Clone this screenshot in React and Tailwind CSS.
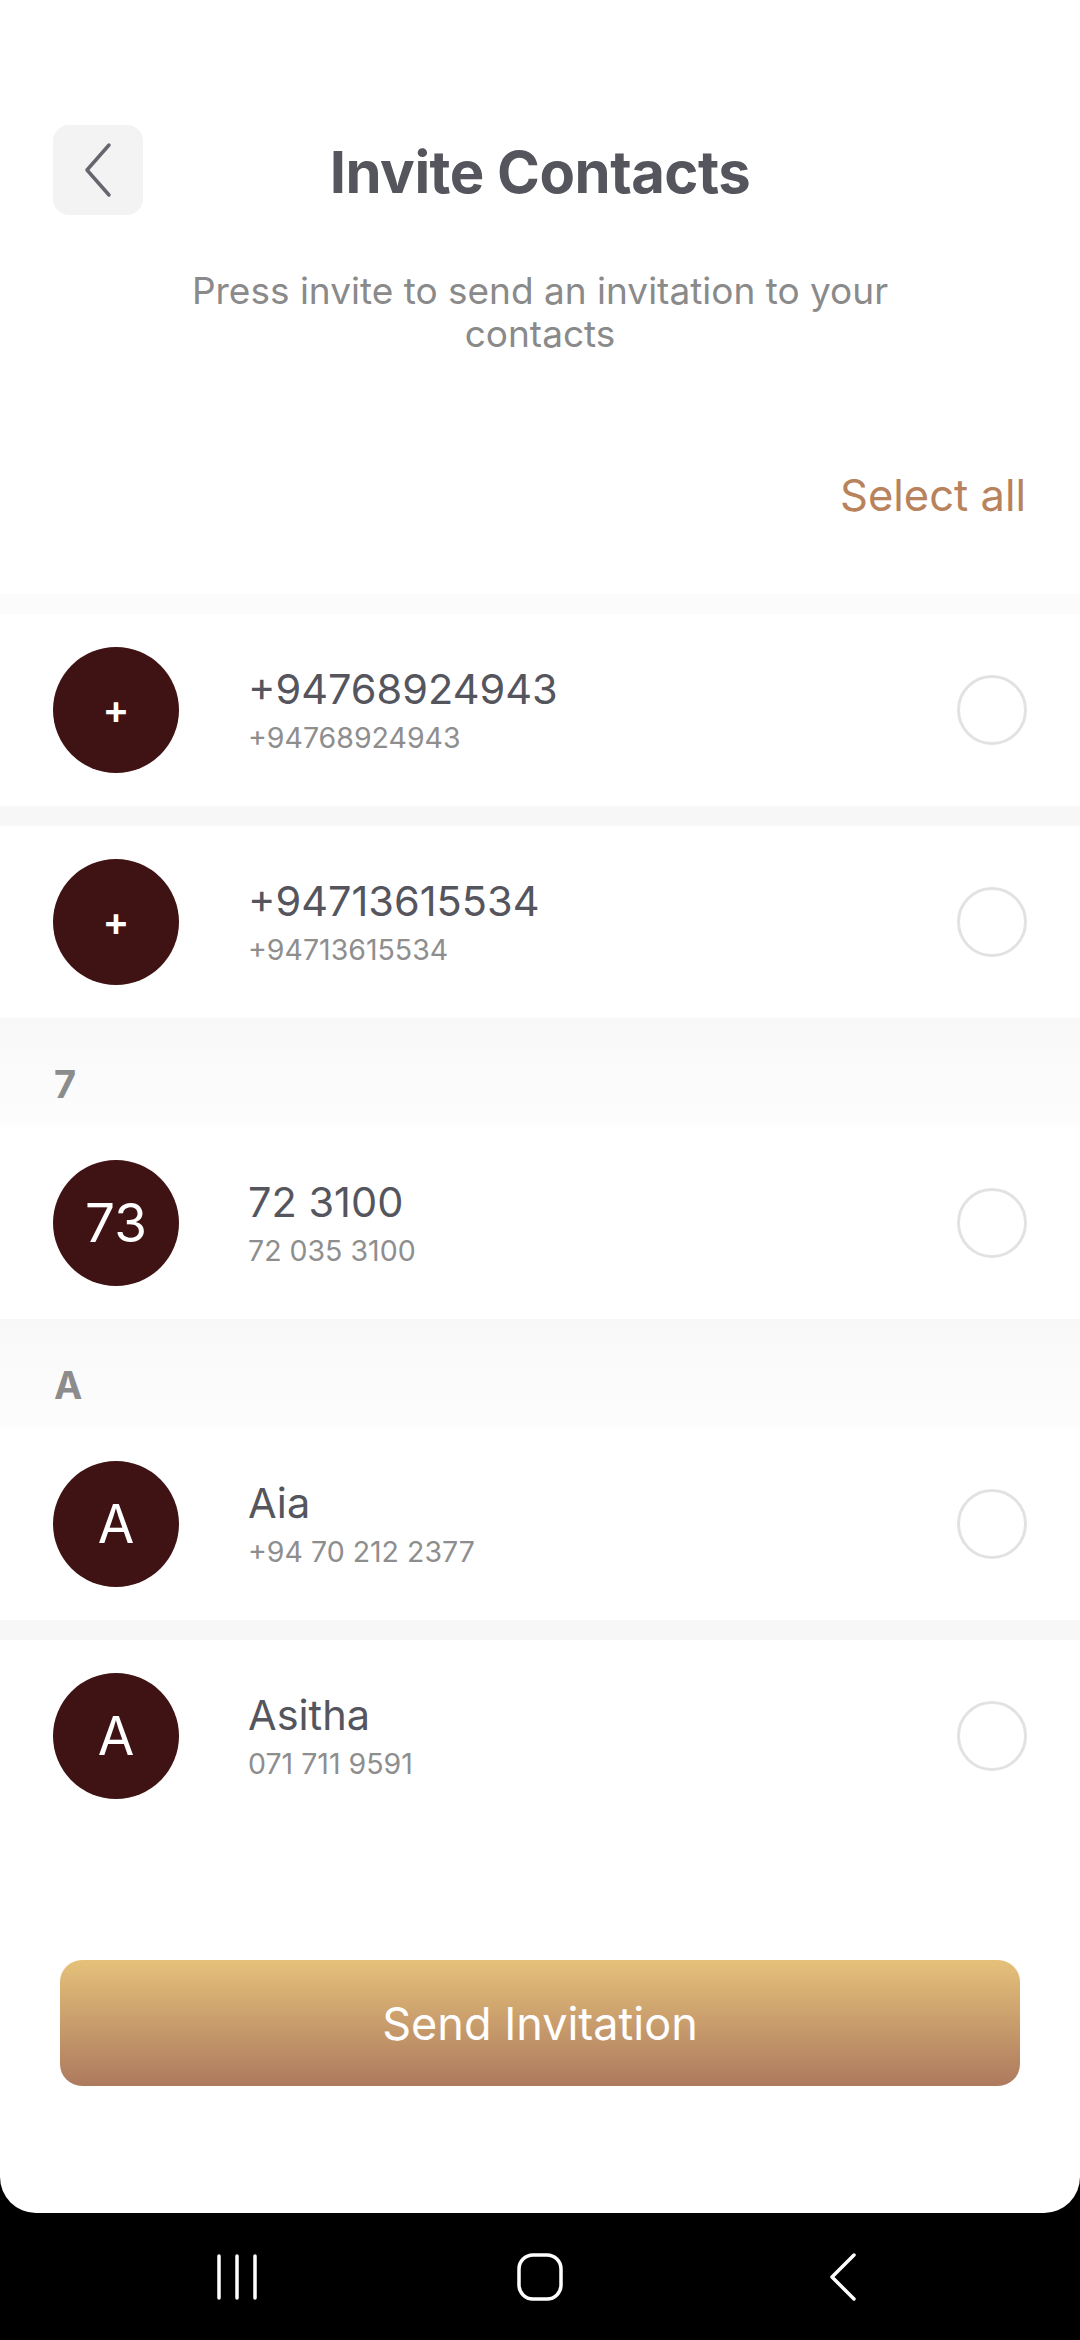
import React from "react";

const FONT = { fontFamily: "Inter, 'Open Sans', sans-serif" };

function Avatar({ label, small }) {
  return (
    <div className="w-[126px] h-[126px] rounded-full bg-[#3f1214] flex items-center justify-center shrink-0">
      {small ? (
        <span className="text-white text-[40px] font-semibold leading-none">{label}</span>
      ) : (
        <span className="text-white text-[53px] font-normal leading-none">{label}</span>
      )}
    </div>
  );
}

function Row({ label, small, name, phone }) {
  return (
    <div className="h-[192px] bg-white flex items-center pl-[53px] pr-[53px]">
      <Avatar label={label} small={small} />
      <div className="flex flex-col ml-[69px] flex-1">
        <span className="text-[41.5px] leading-[48px] text-[#55555e]">{name}</span>
        <span className="text-[28.5px] leading-[34px] text-[#8e8e8e] mt-[8px]">{phone}</span>
      </div>
      <div className="w-[70px] h-[70px] rounded-full border-[3px] border-[#e2e2e2]" />
    </div>
  );
}

function Sep({ light }) {
  return <div className={light ? "h-[20px] bg-[#fbfbfb]" : "h-[20px] bg-[#f7f7f7]"} />;
}

function Header({ letter }) {
  return (
    <div className="h-[109px] bg-gradient-to-b from-[#f8f8f8] to-[#fdfdfd] flex items-start pl-[54px] pt-[46px]">
      <span className="text-[38px] font-bold text-[#8c8c8c] leading-[40px]">{letter}</span>
    </div>
  );
}

export default function App() {
  return (
    <div className="w-[1080px] h-[2340px] bg-black flex flex-col" style={FONT}>
      <div className="bg-white rounded-b-[36px] h-[2213px] flex flex-col">
        <div className="mt-[125px] px-[53px] grid grid-cols-[90px_1fr_90px] items-center">
          <button className="w-[90px] h-[90px] rounded-[16px] bg-[#f3f3f3] flex items-center justify-center">
            <svg width="34" height="56" viewBox="0 0 34 56" fill="none">
              <path d="M28 3 L6 28 L28 53" stroke="#66666e" strokeWidth="3.5" strokeLinecap="round" strokeLinejoin="round" />
            </svg>
          </button>
          <h1 className="text-center text-[58px] font-bold text-[#55555d] leading-none tracking-[-0.5px] pt-[4px]">Invite Contacts</h1>
          <div />
        </div>
        <p className="mt-[54px] text-center text-[37px] leading-[43px] text-[#8a8a8a]">
          Press invite to send an invitation to your
          <br />
          contacts
        </p>
        <div className="mt-[114px] flex justify-end pr-[54px]">
          <span className="text-[43.5px] leading-[52px] text-[#b8835c]">Select all</span>
        </div>
        <div className="mt-[73px] flex flex-col">
          <Sep light />
          <Row label="+" small name="+94768924943" phone="+94768924943" />
          <Sep />
          <Row label="+" small name="+94713615534" phone="+94713615534" />
          <Header letter="7" />
          <Row label="73" name="72 3100" phone="72 035 3100" />
          <Header letter="A" />
          <Row label="A" name="Aia" phone="+94 70 212 2377" />
          <Sep />
          <Row label="A" name="Asitha" phone="071 711 9591" />
        </div>
        <div className="mt-[128px] px-[60px]">
          <button className="w-full h-[126px] rounded-[22px] bg-gradient-to-b from-[#e5c17a] to-[#ad7a5e] flex items-center justify-center">
            <span className="text-white text-[45px] leading-none">Send Invitation</span>
          </button>
        </div>
      </div>
      <div className="flex-1 flex items-center justify-center">
        <div className="w-[303px] flex justify-center">
          <svg width="44" height="46" viewBox="0 0 44 46" fill="none">
            <path d="M4 2 V44 M22 2 V44 M40 2 V44" stroke="white" strokeWidth="3.5" strokeLinecap="round" />
          </svg>
        </div>
        <div className="w-[303px] flex justify-center">
          <svg width="46" height="48" viewBox="0 0 46 48" fill="none">
            <rect x="2" y="2" width="42" height="44" rx="14" stroke="white" strokeWidth="3.5" />
          </svg>
        </div>
        <div className="w-[303px] flex justify-center">
          <svg width="30" height="48" viewBox="0 0 30 48" fill="none">
            <path d="M26 2 L4 24 L26 46" stroke="white" strokeWidth="3.5" strokeLinecap="round" strokeLinejoin="round" />
          </svg>
        </div>
      </div>
    </div>
  );
}
